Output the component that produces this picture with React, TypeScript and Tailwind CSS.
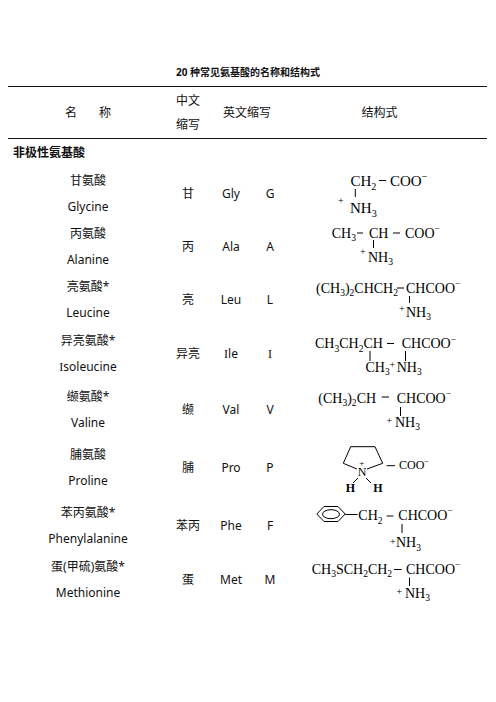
import React from 'react';

type Part = { t: string; k: 'n' | 'sub' | 'sup' };

const parse = (f: string): Part[] => {
  const parts: Part[] = [];
  for (let i = 0; i < f.length; i++) {
    const c = f[i];
    if (c === '_' || c === '^') {
      const t = f[i + 1] === '-' ? '\u2212' : f[i + 1];
      parts.push({ t, k: c === '_' ? 'sub' : 'sup' });
      i++;
    } else {
      const last = parts[parts.length - 1];
      if (last && last.k === 'n') last.t += c;
      else parts.push({ t: c, k: 'n' });
    }
  }
  return parts;
};

// formula text with subscripts (_3) and charges (^-)
const Chem: React.FC<{ x: number; y: number; f: string; size?: number }> = ({ x, y, f, size = 14 }) => {
  let off = 0;
  return (
    <text x={x} y={y} fontSize={size} fill="#000">
      {parse(f).map((p, i) => {
        const target = p.k === 'sub' ? size * 0.25 : p.k === 'sup' ? -size * 0.4 : 0;
        const dy = target - off;
        off = target;
        return (
          <tspan key={i} dy={dy} fontSize={p.k === 'n' ? size : size * 0.68}>
            {p.t}
          </tspan>
        );
      })}
    </text>
  );
};

const Plus: React.FC<{ x: number; cy: number }> = ({ x, cy }) => (
  <text x={x} y={cy + 3.4} fontSize={10} fill="#000">
    +
  </text>
);

const Bond: React.FC<{ x1: number; y1: number; x2: number; y2: number }> = (p) => (
  <line {...p} stroke="#000" strokeWidth={1} />
);

const Svg: React.FC<{ h: number; children: React.ReactNode }> = ({ h, children }) => (
  <svg width={201} height={h} className="block font-['Liberation_Serif',serif]">
    {children}
  </svg>
);

const Gly = () => (
  <Svg h={53}>
    <Chem x={64.5} y={19} f="CH_2" size={15} />
    <Bond x1={93} y1={13.5} x2={100} y2={13.5} />
    <Chem x={104} y={19} f="COO^-" size={15} />
    <Bond x1={69.3} y1={22} x2={69.3} y2={30} />
    <Plus x={52} cy={33.7} />
    <Chem x={64} y={46.3} f="NH_3" size={15} />
  </Svg>
);

const Ala = () => (
  <Svg h={53}>
    <Chem x={45.7} y={17.5} f="CH_3" />
    <Bond x1={71} y1={13} x2={77} y2={13} />
    <Chem x={83} y={17.5} f="CH" />
    <Bond x1={107} y1={13} x2={114} y2={13} />
    <Chem x={119} y={17.5} f="COO^-" />
    <Bond x1={87.5} y1={20} x2={87.5} y2={28} />
    <Plus x={74} cy={32} />
    <Chem x={82} y={41.7} f="NH_3" />
  </Svg>
);

const Leu = () => (
  <Svg h={53}>
    <Chem x={30} y={19.7} f="(CH_3)_2CHCH_2" />
    <Bond x1={111} y1={15} x2={118} y2={15} />
    <Chem x={120} y={19.7} f="CHCOO^-" />
    <Bond x1={123.5} y1={23} x2={123.5} y2={30} />
    <Plus x={113} cy={36} />
    <Chem x={120} y={43.7} f="NH_3" />
  </Svg>
);

const Ile = () => (
  <Svg h={56}>
    <Chem x={29} y={22.3} f="CH_3CH_2CH" />
    <Bond x1={101} y1={17.5} x2={108} y2={17.5} />
    <Chem x={115.7} y={22.3} f="CHCOO^-" />
    <Bond x1={84} y1={25} x2={84} y2={35} />
    <Chem x={79.5} y={45.7} f="CH_3" />
    <Plus x={103.5} cy={38.3} />
    <Chem x={110.7} y={45.7} f="NH_3" />
    <Bond x1={119.5} y1={25} x2={119.5} y2={35} />
  </Svg>
);

const Val = () => (
  <Svg h={56}>
    <Chem x={32.3} y={20.7} f="(CH_3)_2CH" />
    <Bond x1={95.7} y1={15} x2={103} y2={15} />
    <Chem x={110.7} y={20.7} f="CHCOO^-" />
    <Bond x1={114.5} y1={25} x2={114.5} y2={34} />
    <Plus x={100.5} cy={39} />
    <Chem x={109} y={44.7} f="NH_3" />
  </Svg>
);

const Pro = () => (
  <Svg h={60}>
    <polyline
      points="57.3,25.3 64.7,8.7 89,8.7 96.7,25.3"
      fill="none"
      stroke="#000"
      strokeWidth={1}
    />
    <Bond x1={57.3} y1={25.3} x2={71} y2={31} />
    <Bond x1={96.7} y1={25.3} x2={81} y2={31} />
    <text x={75.7} y={27.5} fontSize={9} textAnchor="middle" fill="#000">
      +
    </text>
    <text x={76} y={38} fontSize={12} textAnchor="middle" fill="#000">
      N
    </text>
    <Bond x1={72} y1={40} x2={67} y2={45} />
    <Bond x1={80} y1={40} x2={85} y2={45} />
    <text x={59.7} y={54} fontSize={12} fill="#000" fontWeight={600}>
      H
    </text>
    <text x={87.3} y={54} fontSize={12} fill="#000" fontWeight={600}>
      H
    </text>
    <Bond x1={100.7} y1={27.7} x2={109} y2={27.7} />
    <Chem x={113} y={30.5} f="COO^-" size={12} />
  </Svg>
);

const Phe = () => (
  <Svg h={56}>
    <polygon
      points="30.8,16 38,8.5 52,8.5 59.2,16 52,23.5 38,23.5"
      fill="none"
      stroke="#000"
      strokeWidth={1}
    />
    <ellipse cx={45} cy={16.2} rx={8.5} ry={4.5} fill="none" stroke="#000" strokeWidth={1} />
    <Bond x1={59.2} y1={16.5} x2={71.5} y2={16.5} />
    <Chem x={72.3} y={22} f="CH_2" />
    <Bond x1={100.7} y1={18} x2={107.3} y2={18} />
    <Chem x={112.3} y={22} f="CHCOO^-" />
    <Bond x1={116} y1={26} x2={116} y2={35} />
    <Plus x={104} cy={43.7} />
    <Chem x={110} y={49.3} f="NH_3" />
  </Svg>
);

const Met = () => (
  <Svg h={50}>
    <Chem x={25.7} y={18.7} f="CH_3SCH_2CH_2" />
    <Bond x1={108} y1={14.5} x2={115.7} y2={14.5} />
    <Chem x={120} y={18.7} f="CHCOO^-" />
    <Bond x1={123.5} y1={22.7} x2={123.5} y2={31} />
    <Plus x={110.5} cy={36.7} />
    <Chem x={119} y={42.7} f="NH_3" />
  </Svg>
);

const I = () => <span className="font-['Liberation_Serif',serif]">I</span>;

const rows: {
  h: string;
  cn: React.ReactNode;
  en: React.ReactNode;
  ab: string;
  three: React.ReactNode;
  one: React.ReactNode;
  s: React.ReactNode;
}[] = [
  { h: 'h-[53px]', cn: '甘氨酸', en: 'Glycine', ab: '甘', three: 'Gly', one: 'G', s: <Gly /> },
  { h: 'h-[53px]', cn: '丙氨酸', en: 'Alanine', ab: '丙', three: 'Ala', one: 'A', s: <Ala /> },
  { h: 'h-[53px]', cn: '亮氨酸*', en: 'Leucine', ab: '亮', three: 'Leu', one: 'L', s: <Leu /> },
  {
    h: 'h-[56px]',
    cn: '异亮氨酸*',
    en: (
      <>
        <I />
        soleucine
      </>
    ),
    ab: '异亮',
    three: (
      <>
        <I />
        le
      </>
    ),
    one: <I />,
    s: <Ile />,
  },
  { h: 'h-[56px]', cn: '缬氨酸*', en: 'Valine', ab: '缬', three: 'Val', one: 'V', s: <Val /> },
  { h: 'h-[60px]', cn: '脯氨酸', en: 'Proline', ab: '脯', three: 'Pro', one: 'P', s: <Pro /> },
  { h: 'h-[56px]', cn: '苯丙氨酸*', en: 'Phenylalanine', ab: '苯丙', three: 'Phe', one: 'F', s: <Phe /> },
  { h: 'h-[50px]', cn: '蛋(甲硫)氨酸*', en: 'Methionine', ab: '蛋', three: 'Met', one: 'M', s: <Met /> },
];

const cols = 'grid grid-cols-[160px_40px_46px_32px_201px]';

export default function App() {
  return (
    <div className="w-[496px] h-[702px] bg-white text-[#111] font-['Noto_Sans','Noto_Sans_CJK_SC',sans-serif] text-[12px] pt-[65px]">
      <div className="h-[14px] leading-[14px] text-center text-[10px] font-bold mb-[7px]">
        20 种常见氨基酸的名称和结构式
      </div>

      <div className="ml-[8px] w-[479px]">
        {/* table head */}
        <div className={`${cols} h-[53px] border-t border-b border-[#111]`}>
          <div className="flex items-center justify-center gap-[22px]">
            <span>名</span>
            <span>称</span>
          </div>
          <div className="flex flex-col items-center justify-center leading-[24px]">
            <span>中文</span>
            <span>缩写</span>
          </div>
          <div className="col-span-2 flex items-center justify-center">英文缩写</div>
          <div className="flex items-center justify-center pr-[14px]">结构式</div>
        </div>

        <div className="h-[28px] flex items-center pl-[5px] font-bold">非极性氨基酸</div>

        {rows.map((r, i) => (
          <div key={i} className={`${cols} ${r.h}`}>
            <div className="flex flex-col items-center justify-center leading-[26px]">
              <span>{r.cn}</span>
              <span>{r.en}</span>
            </div>
            <div className="flex items-center justify-center">{r.ab}</div>
            <div className="flex items-center justify-center">{r.three}</div>
            <div className="flex items-center justify-center">{r.one}</div>
            <div className="flex items-center">{r.s}</div>
          </div>
        ))}
      </div>
    </div>
  );
}
